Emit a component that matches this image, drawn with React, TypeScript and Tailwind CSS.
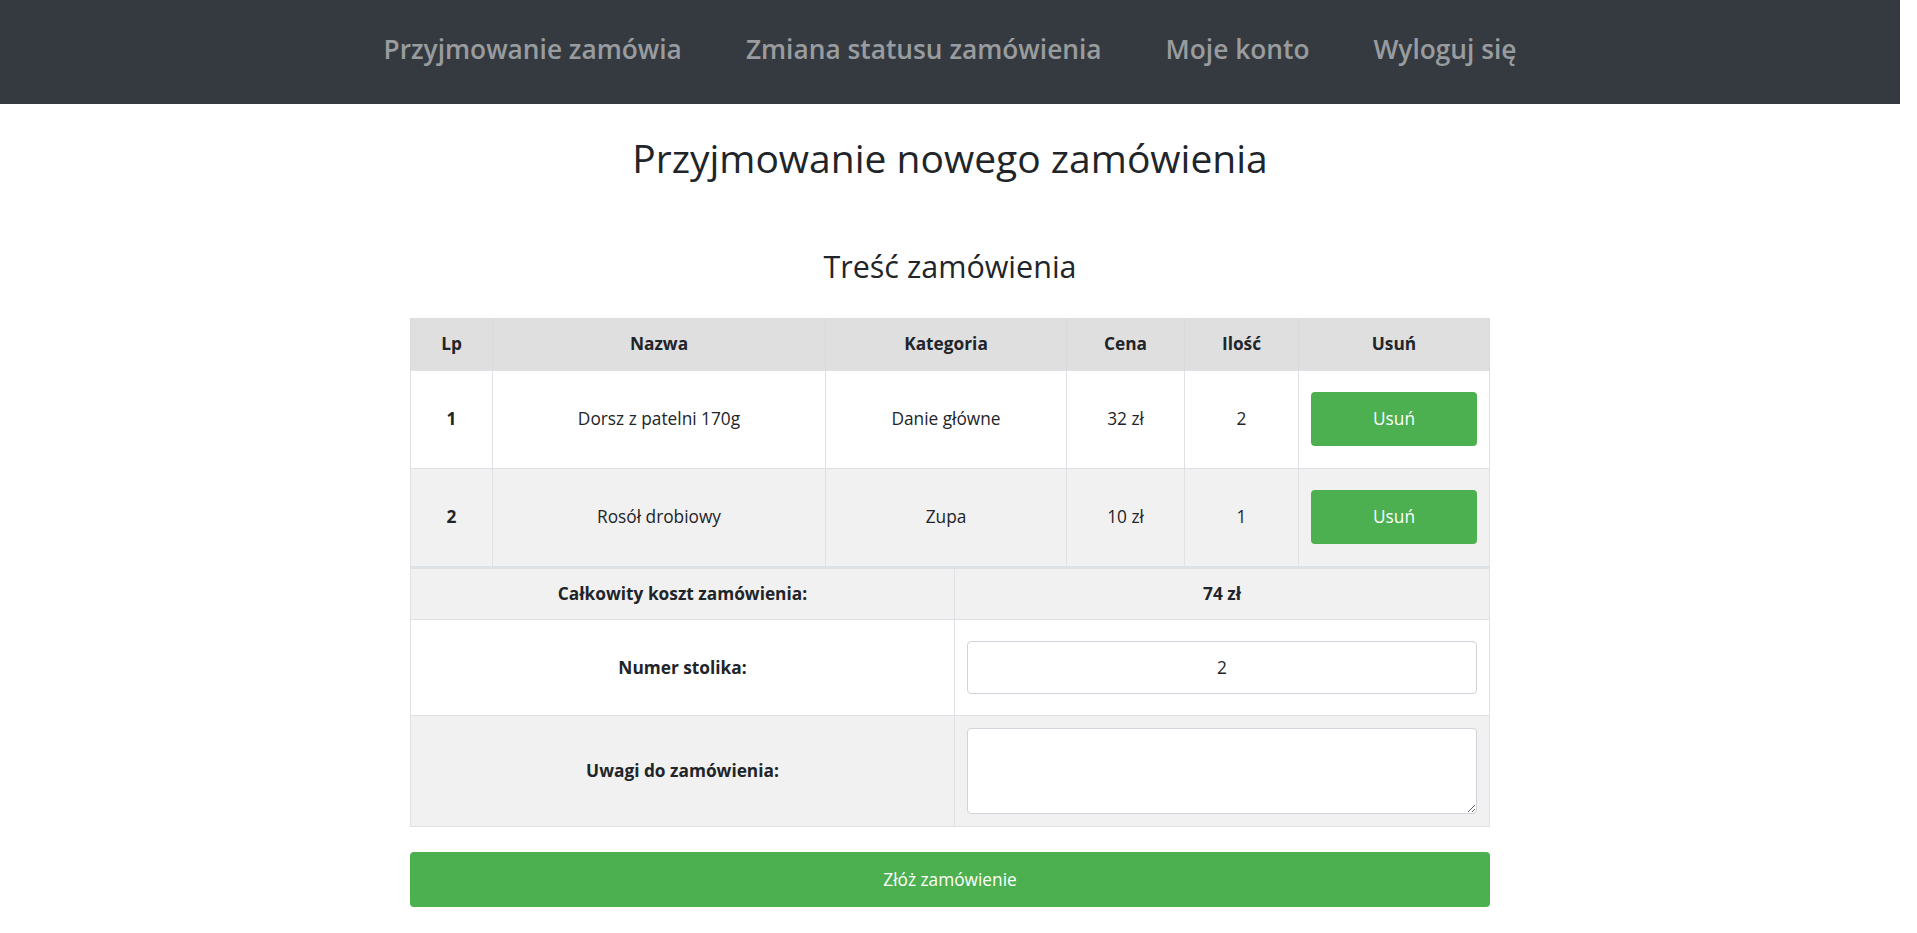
import React from "react"

type Item = {
  lp: number
  name: string
  category: string
  price: string
  qty: number
}

const items: Item[] = [
  { lp: 1, name: "Dorsz z patelni 170g", category: "Danie główne", price: "32 zł", qty: 2 },
  { lp: 2, name: "Rosół drobiowy", category: "Zupa", price: "10 zł", qty: 1 },
]

const navLinks = ["Przyjmowanie zamówia", "Zmiana statusu zamówienia", "Moje konto", "Wyloguj się"]

// Bootstrap-ish order intake page: dark navbar, two stacked bordered tables
// (order lines + summary) and a full-width submit button.
// Page is 1900 wide: the original had a 17px scrollbar on the right.

export default function App() {
  return (
    <div className="w-[1900px] bg-white pb-10 font-['Open_Sans','Noto_Sans',sans-serif] text-[#212529]">
      <nav className="flex h-[104px] items-center justify-center bg-[#343a40] pb-1">
        {navLinks.map((l) => (
          <a
            key={l}
            href="#"
            className="px-[32px] text-[26.3px] font-semibold text-white/50 hover:text-white/75"
          >
            {l}
          </a>
        ))}
      </nav>

      <main className="mx-auto w-[1080px]">
        <h1 className="pt-[31px] text-center text-[39px] font-medium leading-[1.2]">
          Przyjmowanie nowego zamówienia
        </h1>
        <h2 className="mt-[66px] text-center text-[30.5px] font-medium leading-[1.2]">
          Treść zamówienia
        </h2>

        <table className="mt-[34px] w-full border-collapse text-center text-[17.3px] leading-[1.5]">
          <thead>
            <tr className="h-[52px] bg-[#dfdfdf] font-bold">
              <th className="w-[82px] border-x border-[#dadada] px-3">Lp</th>
              <th className="w-[333px] border-x border-[#dadada] px-3">Nazwa</th>
              <th className="w-[241px] border-x border-[#dadada] px-3">Kategoria</th>
              <th className="w-[118px] border-x border-[#dadada] px-3">Cena</th>
              <th className="w-[114px] border-x border-[#dadada] px-3">Ilość</th>
              <th className="border-x border-[#dadada] px-3">Usuń</th>
            </tr>
          </thead>
          <tbody>
            {items.map((it, i) => (
              <tr key={it.lp} className={i % 2 === 1 ? "h-[98px] bg-[#f1f1f1]" : "h-[98px] bg-white"}>
                <td className="border border-[#dee2e6] px-3 font-bold">{it.lp}</td>
                <td className="border border-[#dee2e6] px-3">{it.name}</td>
                <td className="border border-[#dee2e6] px-3">{it.category}</td>
                <td className="border border-[#dee2e6] px-3">{it.price}</td>
                <td className="border border-[#dee2e6] px-3">{it.qty}</td>
                <td className="border border-[#dee2e6] px-3">
                  <button
                    type="button"
                    className="h-[54px] w-full rounded-[4px] bg-[#4caf50] text-white hover:bg-[#449d48]"
                  >
                    Usuń
                  </button>
                </td>
              </tr>
            ))}
          </tbody>
        </table>

        <table className="w-full border-collapse border-t-2 border-[#dee2e6] text-center text-[17.3px] leading-[1.5]">
          <tbody>
            <tr className="h-[52px] bg-[#f1f1f1] font-bold">
              <td className="w-[544px] border border-[#dee2e6] px-3">Całkowity koszt zamówienia:</td>
              <td className="border border-[#dee2e6] px-3">74 zł</td>
            </tr>
            <tr className="h-[96px] bg-white">
              <td className="border border-[#dee2e6] px-3 font-bold">Numer stolika:</td>
              <td className="border border-[#dee2e6] px-3">
                <input
                  defaultValue="2"
                  className="h-[53px] w-full rounded-[4px] border border-[#ced4da] bg-white px-3 text-center outline-none focus:border-[#80bdff]"
                />
              </td>
            </tr>
            <tr className="h-[111px] bg-[#f1f1f1]">
              <td className="border border-[#dee2e6] px-3 font-bold">Uwagi do zamówienia:</td>
              <td className="border border-[#dee2e6] px-3">
                <textarea className="block h-[86px] w-full rounded-[4px] border border-[#ced4da] bg-white px-3 py-2 outline-none focus:border-[#80bdff]" />
              </td>
            </tr>
          </tbody>
        </table>

        <button
          type="submit"
          className="mt-[25px] h-[55px] w-full rounded-[4px] bg-[#4caf50] text-[17.3px] text-white hover:bg-[#449d48]"
        >
          Złóż zamówienie
        </button>
      </main>
    </div>
  )
}
